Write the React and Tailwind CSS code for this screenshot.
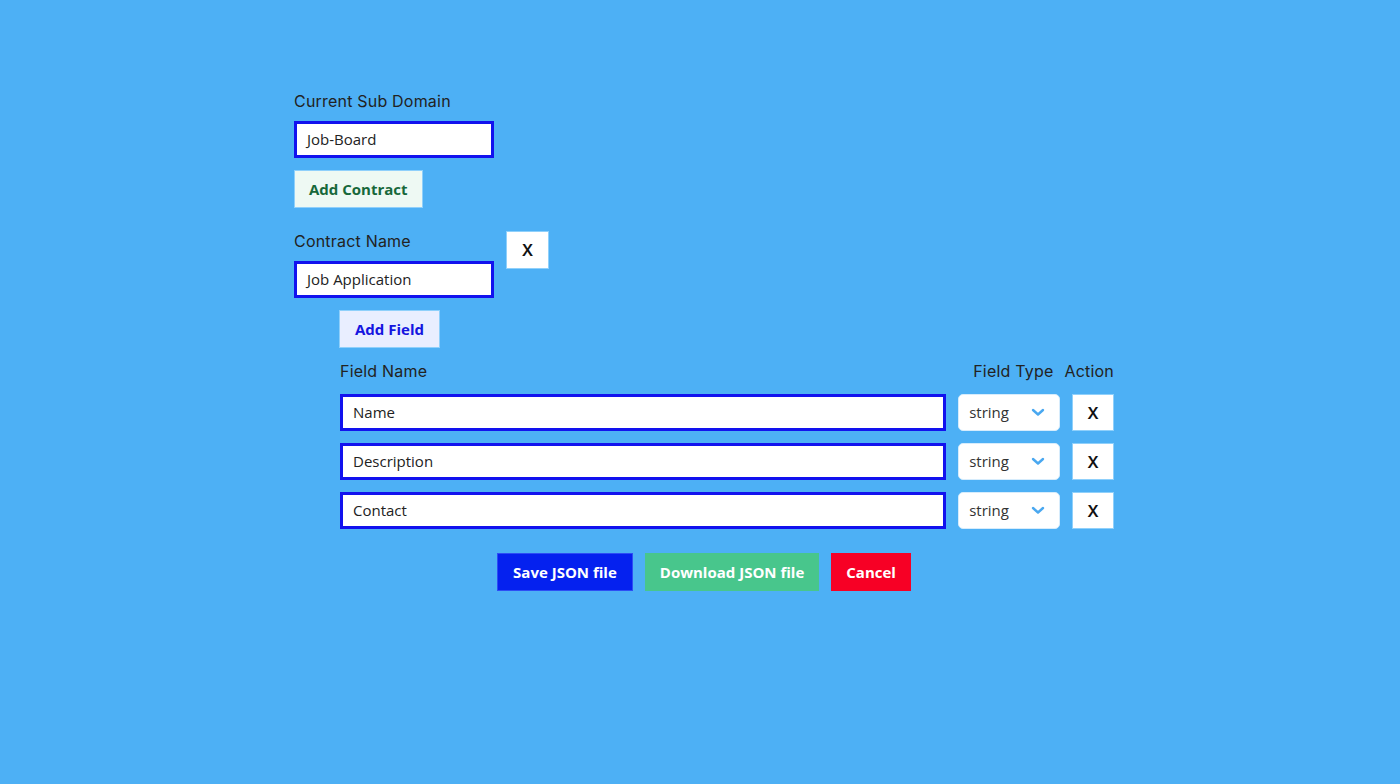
import React from "react";

const labelFont = { fontFamily: "Inter, 'Noto Sans', sans-serif" };

function Chevron() {
  return (
    <svg width="14" height="9" viewBox="0 0 14 9" fill="none">
      <path d="M2 2l5 4.5L12 2" stroke="#4aa8f0" strokeWidth="2.4" strokeLinecap="round" strokeLinejoin="round" />
    </svg>
  );
}

function XBtn({ className = "" }) {
  return (
    <button className={`flex items-center justify-center bg-white border border-[#8fd0fb] text-[16px] font-semibold text-[#111] font-['Inter',sans-serif] ${className}`}>
      X
    </button>
  );
}

function FieldRow({ value }) {
  return (
    <div className="flex items-center gap-[12px] h-[37px]">
      <div className="w-[607px] h-[37px] bg-white border-[3px] border-[#1212ee] flex items-center pl-[10px] text-[15px] text-[#222] font-['Open_Sans',sans-serif]">
        {value}
      </div>
      <div className="w-[102px] h-[37px] bg-white rounded-[5px] border border-[#d6ecfc] flex items-center justify-between pl-[10px] pr-[14px] text-[15px] text-[#333] font-['Open_Sans',sans-serif]">
        <span>string</span>
        <Chevron />
      </div>
      <XBtn className="w-[42px] h-[37px]" />
    </div>
  );
}

export default function App() {
  return (
    <div className="min-h-screen w-full bg-[#4db0f5] pt-[91px] pl-[294px]">
      <div className="w-[820px]">
        <div className="text-[16px] leading-[20px] text-[#222] tracking-[0.2px]" style={labelFont}>
          Current Sub Domain
        </div>
        <div className="mt-[10px] w-[200px] h-[37px] bg-white border-[3px] border-[#1212ee] flex items-center pl-[10px] text-[15px] text-[#222] font-['Open_Sans',sans-serif]">
          Job-Board
        </div>
        <button className="mt-[12px] h-[38px] px-[14px] bg-[#eef9f3] border border-[#8fd0fb] text-[#17683a] font-bold text-[15px] font-['Open_Sans',sans-serif]">
          Add Contract
        </button>

        <div className="mt-[23px] flex items-start">
          <div>
            <div className="text-[16px] leading-[20px] text-[#222] tracking-[0.2px]" style={labelFont}>
              Contract Name
            </div>
            <div className="mt-[10px] w-[200px] h-[37px] bg-white border-[3px] border-[#1212ee] flex items-center pl-[10px] text-[15px] text-[#222] font-['Open_Sans',sans-serif]">
              Job Application
            </div>
          </div>
          <XBtn className="ml-[12px] w-[43px] h-[38px]" />
        </div>

        <button className="ml-[45px] mt-[12px] h-[38px] px-[15px] bg-[#e9eeff] border border-[#8fd0fb] text-[#1515e0] font-bold text-[15px] font-['Open_Sans',sans-serif]">
          Add Field
        </button>

        <div className="ml-[46px] mt-[13px] w-[774px]">
          <div className="flex items-center h-[20px] text-[16px] text-[#222] tracking-[0.2px]" style={labelFont}>
            <span className="flex-1">Field Name</span>
            <span className="mr-[11px]">Field Type</span>
            <span>Action</span>
          </div>
          <div className="mt-[13px] flex flex-col gap-[12px]">
            <FieldRow value="Name" />
            <FieldRow value="Description" />
            <FieldRow value="Contact" />
          </div>
        </div>

        <div className="mt-[24px] flex justify-center gap-[12px]">
          <button className="h-[38px] px-[15px] bg-[#0521ef] border border-[#2d4df5] text-white font-bold text-[15px] font-['Open_Sans',sans-serif]">
            Save JSON file
          </button>
          <button className="h-[38px] px-[15px] bg-[#48c68c] text-white font-bold text-[15px] font-['Open_Sans',sans-serif]">
            Download JSON file
          </button>
          <button className="h-[38px] px-[15px] bg-[#f70025] text-white font-bold text-[15px] font-['Open_Sans',sans-serif]">
            Cancel
          </button>
        </div>
      </div>
    </div>
  );
}
